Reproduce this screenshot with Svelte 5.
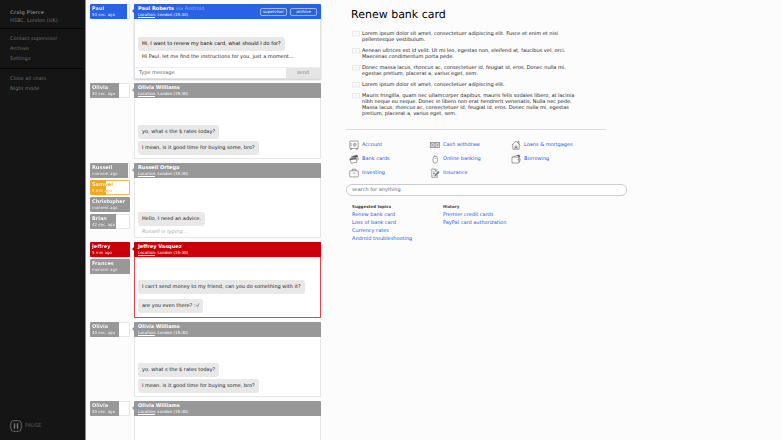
<script>
  const menu = [
    ['Contact supervisor', 'Archive', 'Settings'],
    ['Close all chats', 'Night mode'],
  ];

  const olivia = {
    name: 'Olivia Williams',
    tabs: [{ name: 'Olivia', time: '40 sec. ago', fill: 72 }],
    messages: [
      { text: 'yo, what s the $ rates today?' },
      { text: 'I mean, is it good time for buying some, bro?' },
    ],
  };

  const chats = [
    {
      name: 'Paul Roberts',
      via: 'via Android',
      tone: 'blue',
      active: true,
      tabs: [{ name: 'Paul', time: '50 sec. ago', fill: 92, tone: 'blue' }],
      messages: [
        { text: 'Hi, I want to renew my bank card, what should I do for?', fresh: true },
        { text: 'Hi Paul, let me find the instructions for you, just a moment...', own: true },
      ],
    },
    olivia,
    {
      name: 'Russell Ortega',
      tabs: [
        { name: 'Russell', time: 'moment ago', fill: 95 },
        { name: 'Samuel', time: '5 min ago', fill: 40, tone: 'orange' },
        { name: 'Christopher', time: 'moment ago', fill: 100 },
        { name: 'Brian', time: '42 sec. ago', fill: 65 },
      ],
      messages: [{ text: 'Hello, I need an advice.' }],
      typing: 'Russell is typing...',
    },
    {
      name: 'Jeffrey Vasquez',
      tone: 'red',
      spaced: true,
      tabs: [
        { name: 'Jeffrey', time: '5 min ago', fill: 100, tone: 'red' },
        { name: 'Frances', time: 'moment ago', fill: 100 },
      ],
      messages: [
        { text: "I can't send money to my friend, can you do something with it?" },
        { text: 'are you even there? :-/' },
      ],
    },
    olivia,
    { ...olivia, messages: [] },
  ];

  const steps = [
    'Lorem ipsum dolor sit amet, consectetuer adipiscing elit. Fusce et enim et nisi\npellentesque vestibulum.',
    'Aenean ultrices est id velit. Ut mi leo, egestas non, eleifend at, faucibus vel, orci.\nMaecenas condimentum porta pede.',
    'Donec massa lacus, rhoncus ac, consectetuer id, feugiat id, eros. Donec nulla mi,\negestas pretium, placerat a, varius eget, sem.',
    'Lorem ipsum dolor sit amet, consectetuer adipiscing elit.',
    'Mauris fringilla, quam nec ullamcorper dapibus, mauris felis sodales libero, at lacinia\nnibh neque eu neque. Donec in libero non erat hendrerit venenatis. Nulla nec pede.\nMassa lacus, rhoncus ac, consectetuer id, feugiat id, eros. Donec nulla mi, egestas\npretium, placerat a, varius eget, sem.',
  ];

  const topics = [
    { icon: 'safe', label: 'Account' },
    { icon: 'cash', label: 'Cash withdraw' },
    { icon: 'house', label: 'Loans & mortgages' },
    { icon: 'cards', label: 'Bank cards' },
    { icon: 'mouse', label: 'Online banking' },
    { icon: 'wallet', label: 'Borrowing' },
    { icon: 'case', label: 'Investing' },
    { icon: 'paper', label: 'Insurance' },
  ];

  const lists = [
    { title: 'Suggested topics', links: ['Renew bank card', 'Loss of bank card', 'Currency rates', 'Android troubleshooting'] },
    { title: 'History', links: ['Premier credit cards', 'PayPal card authorization'] },
  ];

  let query = $state('');
  let draft = $state('');
</script>

<div class="app">
  <aside class="sidebar">
    <div class="user">
      <strong>Craig Pierce</strong>
      <span>HSBC, London (UK)</span>
    </div>
    {#each menu as group}
      <nav class="group">
        {#each group as item}
          <a href="#menu">{item}</a>
        {/each}
      </nav>
    {/each}
    <button class="pause">
      <svg viewBox="0 0 12 12" width="12" height="12">
        <rect x="0.7" y="0.7" width="10.6" height="10.6" rx="3" fill="none" stroke="#666" />
        <path d="M4.5 3.3v5.4M7.5 3.3v5.4" stroke="#777" stroke-width="1.4" />
      </svg>
      PAUSE
    </button>
  </aside>

  <main class="chats">
    {#each chats as chat}
      <section class="row">
        <div class="tabs">
          {#each chat.tabs as tab}
            <button class="tab {tab.tone ?? 'gray'}" style="--fill: {tab.fill}%">
              <b>{tab.name}</b>
              <small>{tab.time}</small>
            </button>
          {/each}
        </div>

        <article class="panel {chat.tone ?? 'gray'}">
          <header>
            <div class="who">
              <h2>{chat.name} {#if chat.via}<em>{chat.via}</em>{/if}</h2>
              <p><u>Location</u>: London (15:30)</p>
            </div>
            {#if chat.active}
              <button class="pill">supervisor</button>
              <button class="pill">archive</button>
            {/if}
          </header>
          <div class="messages" class:spaced={chat.spaced} class:compact={chat.active || chat.typing}>
            {#each chat.messages as message}
              <p class:bubble={!message.own} class:own={message.own} class:fresh={message.fresh}>{message.text}</p>
            {/each}
            {#if chat.typing}
              <p class="typing">{chat.typing}</p>
            {/if}
          </div>
          {#if chat.active}
            <form class="compose">
              <input type="text" aria-label="Message" placeholder="Type message" bind:value={draft} />
              <button type="button">send</button>
            </form>
          {/if}
        </article>
      </section>
    {/each}
  </main>

  <section class="help">
    <h1>Renew bank card</h1>
    <ul class="steps">
      {#each steps as step}
        <li>
          <svg viewBox="0 0 8 6" width="8" height="6" fill="none" stroke="#eaeaea">
            <rect x="0.5" y="0.5" width="7" height="4.5" />
            <path d="M2.5 2.8h3" />
          </svg>
          <span>{step}</span>
        </li>
      {/each}
    </ul>
    <hr />

    <div class="topics">
      {#each topics as topic}
        <a href="#topic">
          <svg viewBox="0 0 10 10" width="10" height="10" fill="none" stroke="#666" stroke-width="0.6">
            {#if topic.icon === 'safe'}
              <rect x="0.8" y="1" width="8.4" height="7.4" rx="0.5" />
              <circle cx="5.8" cy="4.7" r="1.4" />
              <path d="M2 3v3.4M1.5 8.4v1h1v-1M7.5 8.4v1h1v-1M5.8 4v1.4" />
            {:else if topic.icon === 'cash'}
              <rect x="0.4" y="2.3" width="9.2" height="5.4" />
              <rect x="1.5" y="3.3" width="7" height="3.4" stroke-width="0.3" />
              <circle cx="5" cy="5" r="1.3" />
              <path d="M2.4 4v2M7.6 4v2" />
            {:else if topic.icon === 'house'}
              <path d="M0.8 5.2 5 1.2l4.2 4M1.8 4.5v4.7h6.4V4.5M7 3V1.2h1v2.7" />
              <path d="M4 9.2V6h2v3.2M4 7.5h2" />
            {:else if topic.icon === 'cards'}
              <path d="m2.2 3.2 5.7-2 1.4 4.2-1.3.6" />
              <path d="m2.5 3 5.6-1.8.4 1.2L6 3.4z" fill="#444" />
              <path d="m.8 4.4 6.2-.8 1 4.6-6 1z" />
              <path d="m1 5 6.2-.8.2.7-6.2.9z" fill="#333" />
            {:else if topic.icon === 'mouse'}
              <rect x="3" y="2.3" width="4.4" height="6.8" rx="2.2" />
              <path d="M5.2 3.7v1.5M5.2 2.3c0-1-.7-.7-1-1.4" />
            {:else if topic.icon === 'wallet'}
              <path d="M1 3h7v6H1zM2 3l4.8-2 1.2 2M8 4.2h1v3.3H8" />
              <path d="M6.5 1.2 8 3l1-.3-.8-1.5z" fill="#444" />
              <circle cx="7.3" cy="5.8" r="0.4" />
            {:else if topic.icon === 'case'}
              <rect x="0.7" y="2.7" width="8.6" height="6.2" rx="0.8" />
              <path d="M3.2 2.7V1.2h3.6v1.5M4 5.2h2" />
            {:else}
              <path d="M7.3 7v2.3H1.8V1h3.7l1.8 1.7M5.4 1v2h1.9M3 4h2.4M3 5.5h2M3 7h1" />
              <path d="M4.8 8 5 6.7l3.3-3.4.9.9L6 7.6z" fill="#777" />
            {/if}
          </svg>
          {topic.label}
        </a>
      {/each}
    </div>

    <input class="search" type="search" aria-label="Search" placeholder="search for anything" bind:value={query} />

    <div class="lists">
      {#each lists as list}
        <div>
          <h3>{list.title}</h3>
          {#each list.links as link}
            <a href="#link">{link}</a>
          {/each}
        </div>
      {/each}
    </div>
  </section>
</div>

<style>
:global(body) {
  margin: 0;
  background: #fcfcfc;
}

.app {
  display: grid;
  grid-template-columns: 86px 236px 1fr;
  height: 100vh;
  overflow: hidden;
  font-family: Verdana, "DejaVu Sans", sans-serif;
  font-size: 5px;
  line-height: 6px;
  color: #222;
  text-rendering: geometricPrecision;
}

.app * {
  box-sizing: border-box;
}

h1, h2, h3, p, ul {
  margin: 0;
  padding: 0;
}

button, input {
  margin: 0;
  padding: 0;
  border: 0;
  background: none;
  font: inherit;
  color: inherit;
  text-rendering: inherit;
}

button {
  cursor: pointer;
}

a {
  color: #1458f5;
  text-decoration: none;
}

/* sidebar */
.sidebar {
  display: flex;
  flex-direction: column;
  border-right: 1px solid #8a8a8a;
  background: #151515;
  color: #6c6c6c;
}

.user,
.group {
  display: flex;
  flex-direction: column;
  gap: 4px;
  padding: 7px 10px 6px;
}

.user {
  gap: 2px;
  padding: 10px 10px 4px;
}

.group {
  border-top: 1px solid #080808;
}

.sidebar a {
  color: #6c6c6c;
}

.pause {
  display: flex;
  align-items: center;
  gap: 3px;
  margin-top: auto;
  padding: 0 10px 8px;
  color: #555;
}

/* chats */
.chats {
  display: flex;
  flex-direction: column;
  gap: 4px;
  padding: 4px 1px 0 4px;
  overflow: hidden;
}

.row {
  display: grid;
  grid-template-columns: 40px 1fr;
  gap: 4px;
  flex: none;
  min-height: 75px;
}

.row:nth-child(even) {
  min-height: 76px;
}

.gray {
  --tone: #989898;
  --edge: #e6e6e6;
  --rest: #fff;
}

.blue {
  --tone: #2a62e6;
  --edge: #e0e0e0;
  --rest: #fff;
}

.orange {
  --tone: #efa820;
  --edge: #f3bb50;
  --rest: #efa820;
}

.red {
  --tone: #c90009;
  --edge: #dc4650;
  --rest: #fff;
}

.tabs {
  display: flex;
  flex-direction: column;
  gap: 2px;
}

.tab {
  height: 15px;
  padding: 1px;
  border: 1px solid transparent;
  border-radius: 1px;
  background:
    linear-gradient(to right, var(--tone) var(--fill), transparent var(--fill)) border-box,
    linear-gradient(#fff, #fff) padding-box,
    linear-gradient(var(--edge), var(--edge)) border-box;
  color: #fff;
  text-align: left;
}

.tab b,
.tab small {
  display: block;
  background: linear-gradient(to right, #fff var(--fill), var(--rest) var(--fill));
  background-clip: text;
  color: transparent;
  white-space: nowrap;
}

.tab small {
  font-size: 4px;
  line-height: 5px;
}

.panel {
  position: relative;
  display: flex;
  flex-direction: column;
  border: 1px solid var(--edge);
  border-top: 0;
  border-radius: 1px;
  background: #fff;
}

.panel.blue {
  box-shadow: 0 1px 2px #ccc;
}

.panel::before {
  content: "";
  position: absolute;
  top: 5px;
  left: -3px;
  border: 2px solid transparent;
  border-left: 0;
  border-right-color: var(--tone);
}

.panel header {
  display: flex;
  align-items: center;
  gap: 3px;
  height: 15px;
  margin: 0 -1px;
  padding: 0 4px;
  border-radius: 1px 1px 0 0;
  background: var(--tone);
  color: #fff;
}

.who {
  flex: 1;
}

.who h2 {
  font-size: 5px;
  line-height: 6px;
}

.who em {
  font-style: normal;
  font-weight: normal;
  color: #8badf5;
}

.who p {
  font-size: 4px;
  line-height: 5px;
}

.pill {
  width: 27px;
  height: 8px;
  border: 1px solid #9dbaf8;
  border-radius: 2px;
  font-size: 4px;
  line-height: 4px;
}

.messages {
  display: flex;
  flex: 1;
  flex-direction: column;
  justify-content: flex-end;
  align-items: flex-start;
  gap: 2px;
  padding: 0 3px 3px;
}

.messages.spaced {
  gap: 5px;
  padding-bottom: 4px;
}

.messages.compact {
  padding-bottom: 1px;
}

.bubble {
  padding: 4px;
  border-radius: 1px 3px 3px 3px;
  background: #e8e8e8;
}

.fresh {
  color: #000;
}

.own,
.typing {
  padding: 1px 4px;
}

.own {
  margin-bottom: 5px;
}

.typing {
  font-style: italic;
  color: #aaa;
}

.compose {
  display: flex;
  height: 11px;
  border-top: 1px solid #eee;
}

.compose input {
  flex: 1;
  min-width: 0;
  padding: 0 4px;
}

.compose button {
  width: 34px;
  background: #e5e5e5;
  color: #888;
}

::placeholder {
  color: #666;
  opacity: 1;
}

/* help */
.help {
  padding: 8px 24px;
}

h1 {
  padding-left: 5px;
  font-size: 11px;
  line-height: 14px;
  font-weight: normal;
  color: #000;
}

.steps {
  display: flex;
  flex-direction: column;
  gap: 5px;
  padding: 9px 6px 12px;
  list-style: none;
}

.steps li {
  display: flex;
  gap: 2px;
  white-space: pre-line;
}

.steps svg,
.topics svg {
  flex: none;
}

hr {
  max-width: 260px;
  margin: 0;
  border: 0;
  border-top: 1px solid #ddd;
}

.topics {
  display: grid;
  grid-template-columns: repeat(3, 81px);
  gap: 4px 0;
  padding: 10px 3px 6px;
}

.topics a {
  display: flex;
  align-items: center;
  gap: 3px;
  white-space: nowrap;
}

.search {
  display: block;
  width: 100%;
  max-width: 281px;
  height: 12px;
  padding: 0 5px;
  border: 1px solid #ccc;
  border-radius: 6px;
  background: #fff;
}

.lists {
  display: grid;
  grid-template-columns: repeat(2, 91px);
  padding: 7px 6px;
}

.lists a {
  display: block;
  line-height: 8px;
}

h3 {
  font-size: 4px;
  line-height: 8px;
  color: #444;
}
</style>
